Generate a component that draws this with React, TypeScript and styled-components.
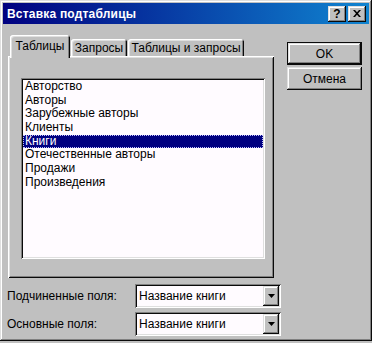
import React from 'react';
import styled, { createGlobalStyle } from 'styled-components';

const GlobalStyle = createGlobalStyle`
  html, body {
    margin: 0;
    padding: 0;
    background: #c0c0c0;
  }
  body {
    font-family: "Liberation Sans", Arial, sans-serif;
    font-size: 12px;
    color: #000;
  }
`;

const raised = `
  box-shadow: inset -1px -1px #0a0a0a, inset 1px 1px #dfdfdf,
    inset -2px -2px #808080, inset 2px 2px #fff;
`;

const sunken = `
  box-shadow: inset 1px 1px #808080, inset -1px -1px #fff,
    inset 2px 2px #0a0a0a, inset -2px -2px #dfdfdf;
`;

const Window = styled.div`
  width: 372px;
  height: 341px;
  box-sizing: border-box;
  padding: 3px;
  background: #c0c0c0;
  display: flex;
  flex-direction: column;
  ${raised}
`;

const TitleBar = styled.div`
  height: 21px;
  display: flex;
  align-items: center;
  padding: 0 3px 0 4px;
  background: linear-gradient(90deg, #000080, #1084d0);
  color: #fff;
  font-weight: bold;
  font-size: 12px;
`;

const Title = styled.span`
  flex: 1;
  letter-spacing: 0.2px;
`;

const TitleButton = styled.button`
  width: 18px;
  height: 16px;
  margin-left: 2px;
  padding: 0;
  border: none;
  background: #c0c0c0;
  display: flex;
  align-items: center;
  justify-content: center;
  font-family: "Liberation Sans", Arial, sans-serif;
  font-weight: bold;
  font-size: 12px;
  color: #000;
  ${raised}
`;

const Body = styled.div`
  display: flex;
  padding: 11px 0 0 5px;
`;

const LeftColumn = styled.div`
  width: 273px;
  display: flex;
  flex-direction: column;
`;

const RightColumn = styled.div`
  margin-left: 6px;
  padding-top: 7px;
  display: flex;
  flex-direction: column;
  gap: 2px;
`;

const TabStrip = styled.div`
  height: 21px;
  display: flex;
  align-items: flex-end;
  padding-left: 2px;
`;

// active tab is taller and overlaps the panel's top edge
const Tab = styled.div<{ $active?: boolean; $w: number }>`
  box-sizing: border-box;
  height: ${p => (p.$active ? '23px' : '17px')};
  margin-bottom: ${p => (p.$active ? '-2px' : '0')};
  width: ${p => p.$w}px;
  margin-right: 1px;
  padding-top: ${p => (p.$active ? '4px' : '2px')};
  text-align: center;
  background: #c0c0c0;
  border-top-left-radius: 3px;
  border-top-right-radius: 3px;
  box-shadow: inset 1px 1px #fff, inset -1px 0 #0a0a0a, inset 2px 2px #dfdfdf, inset -2px 0 #808080;
  position: relative;
  z-index: ${p => (p.$active ? 1 : 0)};
`;

const Panel = styled.div`
  width: 266px;
  height: 222px;
  box-sizing: border-box;
  padding: 22px 0 0 13px;
  background: #c0c0c0;
  box-shadow: inset 1px 1px #fff, inset -1px -1px #0a0a0a,
    inset 2px 2px #dfdfdf, inset -2px -2px #808080;
`;

const ListBox = styled.div`
  width: 244px;
  height: 181px;
  box-sizing: border-box;
  padding: 2px;
  background: #fffbff;
  ${sunken}
`;

const ListItem = styled.div<{ $selected?: boolean }>`
  height: 13.7px;
  line-height: 13.7px;
  padding-left: 2px;
  white-space: nowrap;
  background: ${p => (p.$selected ? '#000080' : 'transparent')};
  color: ${p => (p.$selected ? '#fff' : '#000')};
  outline: ${p => (p.$selected ? '1px dotted #c0c0ff' : 'none')};
  outline-offset: -1px;
`;

const Fields = styled.div`
  margin-top: 6px;
  display: flex;
  flex-direction: column;
  gap: 4px;
`;

const FieldRow = styled.div`
  display: grid;
  grid-template-columns: 127px 146px;
  align-items: center;
  height: 24px;
`;

const FieldLabel = styled.span`
  margin-left: -1px;
`;

const Combo = styled.div`
  height: 24px;
  box-sizing: border-box;
  padding: 2px;
  display: flex;
  background: #fffbff;
  ${sunken}
`;

const ComboText = styled.span`
  flex: 1;
  line-height: 20px;
  padding-left: 2px;
`;

const DropButton = styled.div`
  width: 16px;
  height: 20px;
  background: #c0c0c0;
  display: flex;
  align-items: center;
  justify-content: center;
  ${raised}
`;

const DialogButton = styled.button<{ $default?: boolean }>`
  width: 75px;
  height: 23px;
  padding: 0;
  background: #c0c0c0;
  font-family: "Liberation Sans", Arial, sans-serif;
  font-size: 12px;
  color: #000;
  border: ${p => (p.$default ? '1px solid #0a0a0a' : 'none')};
  box-sizing: border-box;
  ${raised}
`;

const tables = [
  'Авторство',
  'Авторы',
  'Зарубежные авторы',
  'Клиенты',
  'Книги',
  'Отечественные авторы',
  'Продажи',
  'Произведения',
];

const tabs = [
  { label: 'Таблицы', width: 60 },
  { label: 'Запросы', width: 56 },
  { label: 'Таблицы и запросы', width: 116 },
];

const Arrow = () => (
  <svg width="7" height="4" viewBox="0 0 7 4">
    <path d="M0 0h7L3.5 4z" fill="#000" />
  </svg>
);

const CloseGlyph = () => (
  <svg width="8" height="7" viewBox="0 0 8 7">
    <path d="M0 0h2l2 2.2L6 0h2L5 3.5 8 7H6L4 4.8 2 7H0l3-3.5z" fill="#000" />
  </svg>
);

export default function App() {
  return (
    <>
      <GlobalStyle />
      <Window>
        <TitleBar>
          <Title>Вставка подтаблицы</Title>
          <TitleButton>?</TitleButton>
          <TitleButton><CloseGlyph /></TitleButton>
        </TitleBar>
        <Body>
          <LeftColumn>
            <TabStrip>
              {tabs.map((t, i) => (
                <Tab key={t.label} $active={i === 0} $w={t.width}>{t.label}</Tab>
              ))}
            </TabStrip>
            <Panel>
              <ListBox>
                {tables.map(name => (
                  <ListItem key={name} $selected={name === 'Книги'}>{name}</ListItem>
                ))}
              </ListBox>
            </Panel>
            <Fields>
              <FieldRow>
                <FieldLabel>Подчиненные поля:</FieldLabel>
                <Combo>
                  <ComboText>Название книги</ComboText>
                  <DropButton><Arrow /></DropButton>
                </Combo>
              </FieldRow>
              <FieldRow>
                <FieldLabel>Основные поля:</FieldLabel>
                <Combo>
                  <ComboText>Название книги</ComboText>
                  <DropButton><Arrow /></DropButton>
                </Combo>
              </FieldRow>
            </Fields>
          </LeftColumn>
          <RightColumn>
            <DialogButton $default>OK</DialogButton>
            <DialogButton>Отмена</DialogButton>
          </RightColumn>
        </Body>
      </Window>
    </>
  );
}
